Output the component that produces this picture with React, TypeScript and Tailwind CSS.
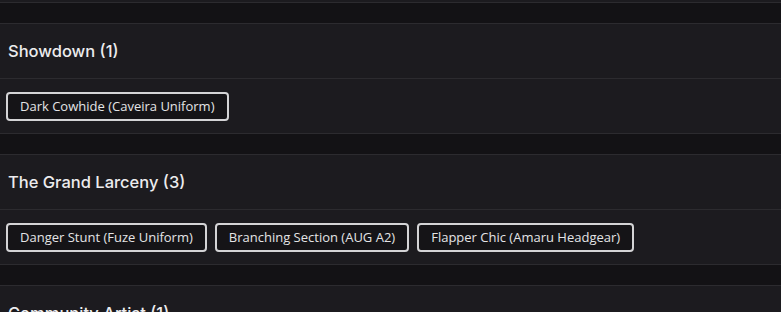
const SECTIONS: { title: string; items: string[] }[] = [
  { title: 'Showdown (1)', items: ['Dark Cowhide (Caveira Uniform)'] },
  {
    title: 'The Grand Larceny (3)',
    items: ['Danger Stunt (Fuze Uniform)', 'Branching Section (AUG A2)', 'Flapper Chic (Amaru Headgear)'],
  },
  { title: 'Community Artist (1)', items: ['Placeholder'] },
];

function Section({ title, items }: { title: string; items: string[] }) {
  return (
    <div className="border-y border-[#2c2b2f] bg-[#1c1b1f]">
      <div className="flex h-[55px] items-center border-b border-[#2c2b2f] px-2">
        <h2 className="font-['Inter',sans-serif] text-[16.5px] font-medium text-[#ececee]">{title}</h2>
      </div>
      <div className="flex h-[54px] items-center gap-2 px-1.5">
        {items.map((item) => (
          <span
            key={item}
            className="rounded-[4px] border-2 border-[#d4d4d6] bg-[#151417] px-3 py-[4px] text-[13px] leading-[17px] text-[#e4e4e6]"
          >
            {item}
          </span>
        ))}
      </div>
    </div>
  );
}

export default function App() {
  return (
    <div
      className="h-[312px] overflow-hidden bg-[#131215]"
      style={{ fontFamily: '"Open Sans", sans-serif' }}
    >
      <div className="h-[3px] border-b border-[#2c2b2f] bg-[#1c1b1f]" />
      <div className="mt-5 flex flex-col gap-5">
        {SECTIONS.map((s) => (
          <Section key={s.title} title={s.title} items={s.items} />
        ))}
      </div>
    </div>
  );
}
